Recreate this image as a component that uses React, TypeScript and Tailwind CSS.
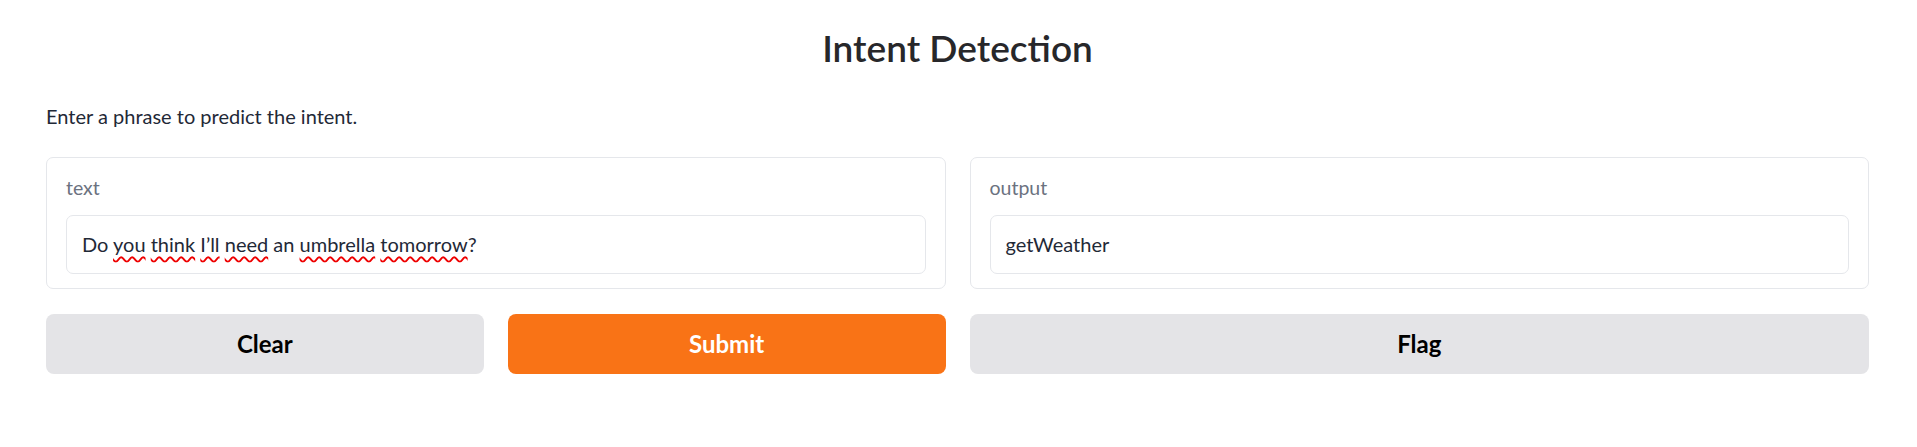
const misspelled = new Set(["you", "think", "I’ll", "need", "umbrella", "tomorrow"]);

function SpellText({ text }: { text: string }) {
  const words = text.split(" ");
  return (
    <>
      {words.map((w, i) => {
        const core = w.replace(/[?.!,]$/, "");
        const tail = w.slice(core.length);
        return (
          <span key={i}>
            {misspelled.has(core) ? (
              <span className="underline decoration-wavy decoration-[#e00] decoration-[1.5px] underline-offset-[4px]">{core}</span>
            ) : (
              core
            )}
            {tail}
            {i < words.length - 1 ? " " : ""}
          </span>
        );
      })}
    </>
  );
}

function Field({ label, children }: { label: string; children: React.ReactNode }) {
  return (
    <div className="rounded-[7px] border border-[#e5e7eb] bg-white px-[19px] pt-[17px] pb-[14px]">
      <div className="mb-[14px] text-[19.5px] leading-[26px] text-[#6b7280]">{label}</div>
      <div className="flex h-[59px] items-center rounded-[7px] border border-[#e5e7eb] px-[15px] pb-[2px] text-[20px] text-[#1f2937]">
        {children}
      </div>
    </div>
  );
}

export default function App() {
  return (
    <div className="min-h-screen bg-white pl-[46px] pr-[48px] font-['Lato',sans-serif] text-[#1f2937]">
      <h1 className="pt-[24px] text-center text-[37px] leading-[48px] font-semibold text-[#27272a]">
        Intent Detection
      </h1>
      <p className="mt-[30px] text-[20px] leading-[28px] text-[#1f2937]">Enter a phrase to predict the intent.</p>

      <div className="mt-[27px] grid grid-cols-2 gap-x-6">
        {/* inputs + actions */}
        <div className="flex flex-col gap-[25px]">
          <Field label="text">
            <div>
              <SpellText text="Do you think I’ll need an umbrella tomorrow?" />
            </div>
          </Field>
          <div className="grid grid-cols-2 gap-6">
            <button className="h-[60px] rounded-[8px] bg-[#e4e4e7] text-[24px] font-bold text-black">Clear</button>
            <button className="h-[60px] rounded-[8px] bg-[#f97316] text-[24px] font-bold text-white">Submit</button>
          </div>
        </div>

        {/* output + flag */}
        <div className="flex flex-col gap-[25px]">
          <Field label="output">
            <div>getWeather</div>
          </Field>
          <button className="h-[60px] rounded-[8px] bg-[#e4e4e7] text-[24px] font-bold text-black">Flag</button>
        </div>
      </div>
    </div>
  );
}
